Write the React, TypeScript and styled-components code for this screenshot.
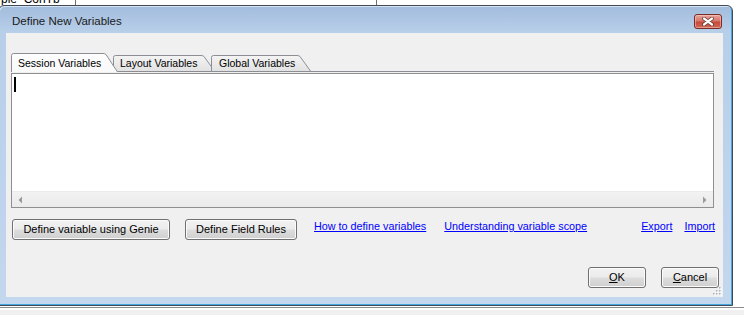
import React from "react";
import styled, { createGlobalStyle } from "styled-components";

const GlobalStyle = createGlobalStyle`
  html, body { margin: 0; padding: 0; background: #ffffff; }
  body { font-family: "Liberation Sans", Arial, sans-serif; overflow: hidden; }
  * { box-sizing: border-box; }
`;

const Screen = styled.div`
  position: relative;
  width: 744px;
  height: 315px;
  overflow: hidden;
  display: flex;
  flex-direction: column;
  background: #ffffff;
`;

const BackStrip = styled.div`
  height: 5px;
  display: flex;
  overflow: hidden;
`;

const BackCell = styled.div<{ $w: number }>`
  width: ${(p) => p.$w}px;
  border-right: 1px solid #707070;
  font-size: 12px;
  line-height: 12px;
  color: #000;
  white-space: nowrap;
  overflow: hidden;
`;

const BackText = styled.span`
  display: block;
  margin-top: -7px;
  padding-left: 1px;
`;

const BackFill = styled.div`
  flex: 1;
`;

const BackFooter = styled.div`
  height: 9px;
  background: linear-gradient(
    to bottom,
    #ffffff 0px,
    #ffffff 1px,
    #8c8c8c 1px,
    #8c8c8c 2px,
    #ffffff 2px,
    #ffffff 4px,
    #f0f0f0 4px
  );
`;

/* ---------- window ---------- */

const Window = styled.div`
  position: absolute;
  left: -2px;
  top: 5px;
  width: 735px;
  height: 301px;
  border: 1px solid #414b55;
  border-radius: 6px 6px 0 0;
  background: linear-gradient(
    to bottom,
    #a2bcdc 0px,
    #b8cfe9 26px,
    #c3d7ee 100%
  );
  box-shadow: inset -1px -1px 0 #46a6e2, inset 1px 1px 0 #d6e3f2;
  display: flex;
  flex-direction: column;
  padding: 0 9px 8px 7px;
`;

const TitleBar = styled.div`
  height: 27px;
  display: flex;
  align-items: center;
  padding-top: 3px;
`;

const TitleText = styled.div`
  margin-left: 6px;
  font-size: 11.5px;
  color: #1a1a1a;
  flex: 1;
`;

const CloseButton = styled.div`
  width: 28px;
  height: 15px;
  margin-right: 1px;
  border: 1px solid #7a2c26;
  border-radius: 3px;
  background: linear-gradient(
    to bottom,
    #e8a59c 0%,
    #d7776c 45%,
    #c54a3c 55%,
    #cf6a56 100%
  );
  box-shadow: inset 0 0 0 1px rgba(255, 220, 210, 0.45);
  display: flex;
  align-items: center;
  justify-content: center;
`;

const Client = styled.div`
  position: relative;
  flex: 1;
  background: #f0f0f0;
  display: flex;
  flex-direction: column;
  padding: 20px 4px 9px 5px;
`;

const Panel = styled.div`
  margin-right: 5px;
  display: flex;
  flex-direction: column;
`;

const TabStrip = styled.div`
  height: 19px;
  display: flex;
  align-items: flex-end;
  border-bottom: 1px solid #8c8e94;
`;

const Tab = styled.div<{ $w: number; $h: number; $active?: boolean; $overlap: number; $pad: number }>`
  position: relative;
  width: ${(p) => p.$w}px;
  height: ${(p) => p.$h}px;
  margin-left: ${(p) => -p.$overlap}px;
  margin-bottom: ${(p) => (p.$active ? -1 : 0)}px;
  z-index: ${(p) => (p.$active ? 3 : 1)};
  padding-left: ${(p) => p.$pad}px;
  padding-top: ${(p) => (p.$active ? 4 : 2)}px;
  font-size: 10.5px;
  line-height: 12px;
  color: #000;
  white-space: nowrap;
`;

const TabShape = styled.svg`
  position: absolute;
  left: 0;
  top: 0;
  z-index: -1;
`;

const TabLabel = styled.span`
  position: relative;
`;

const Editor = styled.div`
  margin-top: 1px;
  height: 135px;
  border: 1px solid #8e8f90;
  background: #ffffff;
  display: flex;
  flex-direction: column;
`;

const EditArea = styled.div`
  flex: 1;
  padding: 3px 0 0 2px;
`;

const Caret = styled.div`
  width: 2px;
  height: 15px;
  background: #000;
`;

const HScroll = styled.div`
  height: 16px;
  display: flex;
  justify-content: space-between;
  align-items: center;
  background: linear-gradient(to bottom, #f2f2f2, #eaeaea);
  border-top: 1px solid #ebebeb;
`;

const ScrollArrow = styled.div`
  width: 17px;
  height: 15px;
  display: flex;
  align-items: center;
  justify-content: center;
`;

const ActionRow = styled.div`
  margin-top: 11px;
  margin-left: 1px;
  margin-right: 4px;
  display: flex;
  align-items: flex-start;
`;

const WinButton = styled.button<{ $w: number; $ml?: number }>`
  width: ${(p) => p.$w}px;
  height: 21px;
  margin: 0 0 0 ${(p) => p.$ml ?? 0}px;
  padding: 0;
  border: 1px solid #707070;
  border-radius: 3px;
  background: linear-gradient(
    to bottom,
    #f2f2f2 0%,
    #ebebeb 48%,
    #dddddd 52%,
    #cfcfcf 100%
  );
  box-shadow: inset 0 0 0 1px #fbfbfb;
  font-family: "Liberation Sans", Arial, sans-serif;
  font-size: 11px;
  color: #000;
  line-height: 19px;
`;

const HelpLink = styled.a<{ $ml?: number; $auto?: boolean }>`
  margin-left: ${(p) => (p.$auto ? "auto" : `${p.$ml ?? 0}px`)};
  margin-top: 1px;
  font-size: 10.8px;
  line-height: 13px;
  color: #0000ff;
  text-decoration: underline;
  text-underline-offset: 1px;
  cursor: pointer;
  white-space: nowrap;
`;

const DialogFooter = styled.div`
  margin-top: auto;
  display: flex;
  justify-content: flex-end;
  gap: 15px;
`;

const Grip = styled.svg`
  position: absolute;
  right: 1px;
  bottom: 1px;
`;

function TabShapeSvg({ w, h, active }: { w: number; h: number; active?: boolean }) {
  const s = active ? 13 : 12;
  const id = active ? "tabA" : "tabI";
  const d = `M0.5 ${h} V2.5 Q0.5 0.5 2.5 0.5 H${w - s - 2} Q${w - s} 0.5 ${w - s + 1} 1.5 L${w - 0.5} ${h}`;
  return (
    <TabShape width={w} height={h} viewBox={`0 0 ${w} ${h}`}>
      <defs>
        <linearGradient id={id} x1="0" y1="0" x2="0" y2="1">
          <stop offset="0" stopColor={active ? "#fdfdfd" : "#f4f4f4"} />
          <stop offset="1" stopColor={active ? "#f9f9f9" : "#e2e2e2"} />
        </linearGradient>
      </defs>
      <path d={`${d} Z`} fill={`url(#${id})`} stroke="none" />
      <path d={d} fill="none" stroke="#8c8e94" strokeWidth="1" />
    </TabShape>
  );
}

function TabItem({
  label,
  w,
  active,
  overlap,
  pad,
}: {
  label: string;
  w: number;
  active?: boolean;
  overlap: number;
  pad: number;
}) {
  const h = active ? 19 : 16;
  return (
    <Tab $w={w} $h={h} $active={active} $overlap={overlap} $pad={pad}>
      <TabShapeSvg w={w} h={h} active={active} />
      <TabLabel>{label}</TabLabel>
    </Tab>
  );
}

export default function App() {
  return (
    <>
      <GlobalStyle />
      <Screen>
        <BackStrip>
          <BackCell $w={76}>
            <BackText>ple_ConTb_</BackText>
          </BackCell>
          <BackCell $w={301} />
        </BackStrip>
        <BackFill />
        <BackFooter />

        <Window>
          <TitleBar>
            <TitleText>Define New Variables</TitleText>
            <CloseButton>
              <svg width="12" height="9" viewBox="0 0 12 9">
                <path d="M2 1.5 L10 7.5 M10 1.5 L2 7.5" stroke="#5a2a26" strokeWidth="3.6" strokeLinecap="round" />
                <path d="M2 1.5 L10 7.5 M10 1.5 L2 7.5" stroke="#ffffff" strokeWidth="2.2" strokeLinecap="round" />
              </svg>
            </CloseButton>
          </TitleBar>

          <Client>
            <Panel>
              <TabStrip>
                <TabItem label="Session Variables" w={107} active overlap={0} pad={7} />
                <TabItem label="Layout Variables" w={102} overlap={5} pad={7} />
                <TabItem label="Global Variables" w={100} overlap={4} pad={8} />
              </TabStrip>

              <Editor>
                <EditArea>
                  <Caret />
                </EditArea>
                <HScroll>
                  <ScrollArrow>
                    <svg width="5" height="8" viewBox="0 0 5 8">
                      <path d="M4 0.5 L0.5 4 L4 7.5 Z" fill="#9a9a9a" />
                    </svg>
                  </ScrollArrow>
                  <ScrollArrow>
                    <svg width="5" height="8" viewBox="0 0 5 8">
                      <path d="M1 0.5 L4.5 4 L1 7.5 Z" fill="#9a9a9a" />
                    </svg>
                  </ScrollArrow>
                </HScroll>
              </Editor>
            </Panel>

            <ActionRow>
              <WinButton $w={158}>Define variable using Genie</WinButton>
              <WinButton $w={112} $ml={15}>Define Field Rules</WinButton>
              <HelpLink $ml={17}>How to define variables</HelpLink>
              <HelpLink $ml={18}>Understanding variable scope</HelpLink>
              <HelpLink $auto>Export</HelpLink>
              <HelpLink $ml={12}>Import</HelpLink>
            </ActionRow>

            <DialogFooter>
              <WinButton $w={58}>
                <u>O</u>K
              </WinButton>
              <WinButton $w={58}>
                <u>C</u>ancel
              </WinButton>
            </DialogFooter>

            <Grip width="10" height="10" viewBox="0 0 10 10">
              {[
                [8, 2],
                [5, 5],
                [8, 5],
                [2, 8],
                [5, 8],
                [8, 8],
              ].map(([x, y]) => (
                <g key={`${x}-${y}`}>
                  <rect x={x} y={y} width="1.5" height="1.5" fill="#ffffff" />
                  <rect x={x - 1} y={y - 1} width="1.5" height="1.5" fill="#a8b0b8" />
                </g>
              ))}
            </Grip>
          </Client>
        </Window>
      </Screen>
    </>
  );
}
